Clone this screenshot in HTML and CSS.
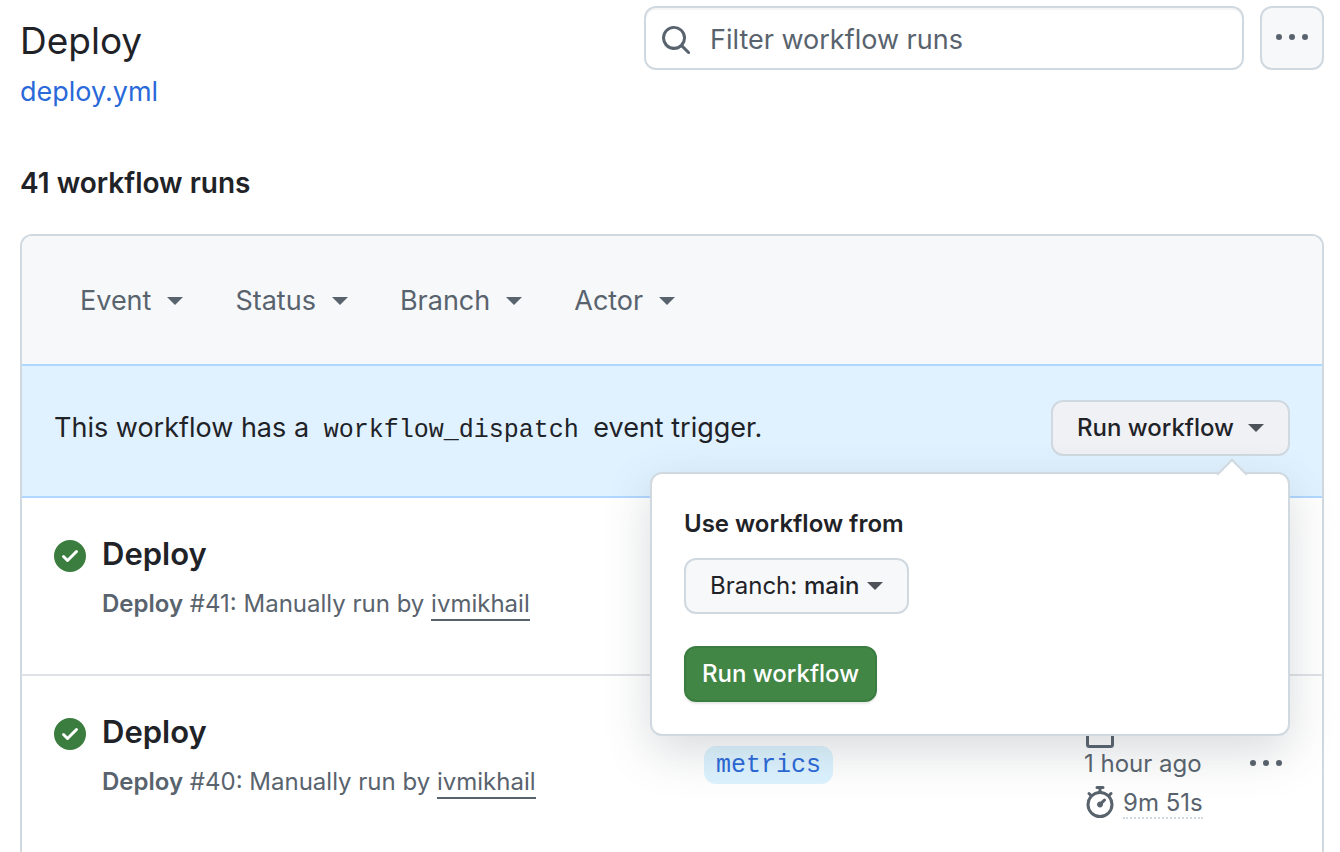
FILE: index.html
```html
<!DOCTYPE html>
<html lang="en">
<head>
<meta charset="utf-8">
<meta name="viewport" content="width=device-width, initial-scale=1">
<title>Deploy · Workflow runs</title>
<link rel="stylesheet" href="styles.css">
</head>
<body>
<main class="page">
  <header class="page-header">
    <div class="heading">
      <h1 class="title">Deploy</h1>
      <a class="file-link" href="#">deploy.yml</a>
    </div>
    <div class="tools">
      <label class="search">
        <svg class="icon" viewBox="0 0 16 16" aria-hidden="true"><path d="M10.68 11.74a6 6 0 0 1-7.922-8.982 6 6 0 0 1 8.982 7.922l3.04 3.04a.749.749 0 0 1-.326 1.275.749.749 0 0 1-.734-.215ZM11.5 7a4.499 4.499 0 1 0-8.997 0A4.499 4.499 0 0 0 11.5 7Z"/></svg>
        <input class="search-input" type="text" placeholder="Filter workflow runs" aria-label="Filter workflow runs">
      </label>
      <button class="more" type="button" aria-label="More options">
        <svg class="icon" viewBox="0 0 16 16" aria-hidden="true"><circle cx="1.5" cy="8" r="1.5"/><circle cx="8" cy="8" r="1.5"/><circle cx="14.5" cy="8" r="1.5"/></svg>
      </button>
    </div>
  </header>

  <h2 class="count">41 workflow runs</h2>

  <section class="box">
    <div class="filters">
      <button class="filter" type="button">Event <span class="caret"></span></button>
      <button class="filter" type="button">Status <span class="caret"></span></button>
      <button class="filter" type="button">Branch <span class="caret"></span></button>
      <button class="filter" type="button">Actor <span class="caret"></span></button>
    </div>

    <div class="banner">
      <p class="banner-text">This workflow has a <code class="code">workflow_dispatch</code> event trigger.</p>
      <div class="dispatch">
        <button class="btn btn-open" type="button" aria-expanded="true">Run workflow <span class="caret"></span></button>
        <div class="popover">
          <h3 class="popover-title">Use workflow from</h3>
          <button class="btn btn-branch" type="button"><span>Branch: <b class="branch-name">main</b></span><span class="caret"></span></button>
          <button class="btn btn-primary" type="button">Run workflow</button>
        </div>
      </div>
    </div>

    <article class="run">
      <svg class="icon status" viewBox="0 0 16 16" role="img" aria-label="Success"><path d="M8 16A8 8 0 1 1 8 0a8 8 0 0 1 0 16Zm3.78-9.72a.751.751 0 0 0-.018-1.042.751.751 0 0 0-1.042-.018L6.75 9.19 5.28 7.72a.751.751 0 0 0-1.042.018.751.751 0 0 0-.018 1.042l2 2a.75.75 0 0 0 1.06 0Z"/></svg>
      <div class="run-main">
        <h3 class="run-title">Deploy</h3>
        <p class="run-info"><b class="workflow">Deploy</b> #41: Manually run by <a class="user" href="#">ivmikhail</a></p>
      </div>
    </article>

    <article class="run">
      <svg class="icon status" viewBox="0 0 16 16" role="img" aria-label="Success"><path d="M8 16A8 8 0 1 1 8 0a8 8 0 0 1 0 16Zm3.78-9.72a.751.751 0 0 0-.018-1.042.751.751 0 0 0-1.042-.018L6.75 9.19 5.28 7.72a.751.751 0 0 0-1.042.018.751.751 0 0 0-.018 1.042l2 2a.75.75 0 0 0 1.06 0Z"/></svg>
      <div class="run-main">
        <h3 class="run-title">Deploy</h3>
        <p class="run-info"><b class="workflow">Deploy</b> #40: Manually run by <a class="user" href="#">ivmikhail</a></p>
      </div>
      <div class="run-branch"><a class="branch-label" href="#">metrics</a></div>
      <div class="run-meta">
        <svg class="icon" viewBox="0 0 16 16" aria-hidden="true"><path d="M4.75 0a.75.75 0 0 1 .75.75V2h5V.75a.75.75 0 0 1 1.5 0V2h1.25c.966 0 1.75.784 1.75 1.75v10.5A1.75 1.75 0 0 1 13.25 16H2.75A1.75 1.75 0 0 1 1 14.25V3.75C1 2.784 1.784 2 2.75 2H4V.75A.75.75 0 0 1 4.75 0ZM2.5 7.5v6.75c0 .138.112.25.25.25h10.5a.25.25 0 0 0 .25-.25V7.5Zm10.75-4H2.75a.25.25 0 0 0-.25.25V6h11V3.75a.25.25 0 0 0-.25-.25Z"/></svg>
        <span class="ago">1 hour ago</span>
        <span class="duration">
          <svg class="icon" viewBox="0 0 16 16" aria-hidden="true"><path d="M5.75.75A.75.75 0 0 1 6.5 0h3a.75.75 0 0 1 0 1.5h-.75v1l-.001.041a6.72 6.72 0 0 1 3.464 1.435l.007-.006.75-.75a.749.749 0 0 1 1.275.326.749.749 0 0 1-.215.734l-.75.75-.006.007a6.75 6.75 0 1 1-10.548 0L2.72 5.03l-.75-.75a.751.751 0 0 1 .018-1.042.751.751 0 0 1 1.042-.018l.75.75.007.006A6.72 6.72 0 0 1 7.25 2.541V1.5H6.5a.75.75 0 0 1-.75-.75ZM8 14.5a5.25 5.25 0 1 0-.001-10.501A5.25 5.25 0 0 0 8 14.5Zm.389-6.7 1.33-1.33a.75.75 0 1 1 1.061 1.06L9.45 8.861A1.503 1.503 0 0 1 8 10.75a1.499 1.499 0 1 1 .389-2.95Z"/></svg>
          <a class="duration-link" href="#">9m 51s</a>
        </span>
      </div>
      <button class="kebab" type="button" aria-label="Run options">
        <svg class="icon" viewBox="0 0 16 16" aria-hidden="true"><circle cx="1.5" cy="8" r="1.5"/><circle cx="8" cy="8" r="1.5"/><circle cx="14.5" cy="8" r="1.5"/></svg>
      </button>
    </article>
  </section>
</main>
</body>
</html>
```

FILE: styles.css
```css
* { box-sizing: border-box; }

body {
  margin: 0;
  background: #fff;
  color: #1f2328;
  font-family: Inter, "Liberation Sans", sans-serif;
  font-size: 27px;
  line-height: 40px;
}

h1, h2, h3, p { margin: 0; }
button, input { font: inherit; color: inherit; }
button { cursor: pointer; }
a { color: inherit; text-decoration: none; }

.page { padding: 6px 16px 0 20px; }

.icon {
  display: block;
  flex: none;
  width: 32px;
  height: 32px;
  fill: #59636e;
}

.caret {
  flex: none;
  border: 8px solid transparent;
  border-top-color: currentColor;
  border-bottom: 0;
}

/* Header */
.page-header {
  display: flex;
  justify-content: space-between;
  align-items: flex-start;
  gap: 24px;
}

.title {
  padding-top: 7px;
  font-size: 37px;
  font-weight: 400;
  line-height: 56px;
}

.file-link {
  display: block;
  color: #2a69d9;
  line-height: 46px;
}

.tools {
  display: flex;
  flex: 0 1 680px;
  gap: 16px;
}

.search {
  display: flex;
  flex: 1;
  align-items: center;
  gap: 18px;
  height: 64px;
  padding: 4px 16px 0 14px;
  border: 2px solid #d1d9e0;
  border-radius: 12px;
  box-shadow: inset 0 2px 0 #f5f6f7;
}

.search-input {
  flex: 1;
  min-width: 0;
  padding: 0;
  border: 0;
  outline: 0;
  background: transparent;
}

.search-input::placeholder { color: #59636e; opacity: 1; }

.more {
  display: grid;
  place-items: center;
  width: 64px;
  height: 64px;
  padding: 0 0 2px;
  border: 2px solid #d1d9e0;
  border-radius: 12px;
  background: #f6f8fa;
}

.count {
  padding: 48px 0 31px;
  font-size: 28px;
  font-weight: 600;
  line-height: 40px;
}

/* Runs box */
.box {
  border: 2px solid #d1d9e0;
  border-bottom: 0;
  border-radius: 12px 12px 0 0;
}

.filters {
  display: flex;
  align-items: center;
  gap: 52px;
  padding: 45px 58px 43px;
  border-radius: 10px 10px 0 0;
  background: #f6f8fa;
}

.filter {
  display: flex;
  align-items: center;
  gap: 16px;
  padding: 0;
  border: 0;
  background: none;
  color: #59636e;
}

.banner {
  display: flex;
  align-items: center;
  justify-content: space-between;
  padding: 34px 32px 40px;
  border: solid #b0d7ff;
  border-width: 2px 0;
  background: #e0f2ff;
}

.banner-text { padding-top: 3px; }

.code {
  padding: 0 7px;
  font-family: "Liberation Mono", monospace;
  font-size: 25px;
}

.dispatch { position: relative; }

.btn {
  display: flex;
  align-items: center;
  height: 56px;
  padding: 0 24px;
  border: 2px solid #d1d9e0;
  border-radius: 12px;
  background: #f6f8fa;
  font-size: 24px;
  font-weight: 500;
}

.btn .caret { color: #4d5259; }

.btn-open {
  gap: 14px;
  background: #eff1f5;
}

.popover {
  position: absolute;
  top: 72px;
  right: 0;
  z-index: 1;
  width: 640px;
  padding: 32px;
  border: 2px solid #d1d9e0;
  border-radius: 12px;
  background: #fff;
  box-shadow: 0 16px 48px rgba(66, 74, 83, 0.2);
}

.popover::before {
  content: "";
  position: absolute;
  top: -11px;
  right: 45px;
  width: 20px;
  height: 20px;
  border: solid #d1d9e0;
  border-width: 2px 0 0 2px;
  background: linear-gradient(135deg, #fff 50%, transparent 50%);
  transform: rotate(45deg);
}

.popover-title {
  margin-bottom: 16px;
  font-size: 24px;
  font-weight: 600;
  line-height: 36px;
}

.btn-branch {
  gap: 8px;
  margin-bottom: 32px;
  font-weight: 400;
}

.branch-name { font-weight: 500; }

.btn-primary {
  padding: 0 16px;
  border-color: #3a7d40;
  background: #428646;
  color: #fff;
  box-shadow: 0 2px 2px rgba(31, 35, 40, 0.1);
}

/* Run rows */
.run {
  display: grid;
  grid-template-columns: 32px minmax(0, 586fr) minmax(0, 364fr) 150px 32px;
  column-gap: 16px;
  padding: 32px 40px 32px 32px;
}

.run + .run { border-top: 2px solid #dfe3e8; }

.status {
  margin-top: 10px;
  fill: #3b7d3f;
}

.run-main { min-height: 112px; }

.run-title {
  font-size: 31px;
  font-weight: 600;
  line-height: 48px;
}

.run-info {
  padding-top: 8px;
  color: #59636e;
  font-size: 24px;
  line-height: 36px;
}

.workflow { font-weight: 600; }

.user {
  padding-bottom: 1px;
  border-bottom: 2px solid #59636e;
}

.run-branch {
  display: flex;
  align-items: flex-start;
  padding-top: 38px;
}

.branch-label {
  padding: 3px 12px 1px;
  border-radius: 12px;
  background: #ddf4ff;
  color: #2a69d9;
  font-family: "Liberation Mono", monospace;
  font-size: 25px;
  line-height: 34px;
}

.run-meta {
  padding-top: 8px;
  color: #59636e;
  font-size: 24px;
  line-height: 32px;
  white-space: nowrap;
}

.ago { display: block; }

.duration {
  display: flex;
  align-items: center;
  gap: 7px;
  padding-top: 5px;
}

.duration-link {
  padding-top: 4px;
  border-bottom: 2px dotted #d1d9e0;
  line-height: 28px;
}

.kebab {
  align-self: start;
  margin-top: 39px;
  padding: 0;
  border: 0;
  background: none;
}
```
